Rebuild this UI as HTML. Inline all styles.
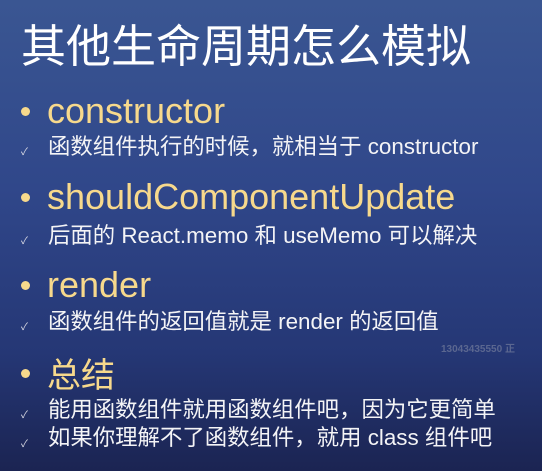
<!DOCTYPE html>
<html><head><meta charset="utf-8"><style>
html,body{margin:0;padding:0}
body{width:542px;height:471px;overflow:hidden;position:relative;
background:linear-gradient(180deg,#3a5692 0%,#30478a 40%,#253775 75%,#1b2452 100%);
font-family:"Liberation Sans","Noto Sans CJK SC",sans-serif;color:#fff}
.t{position:absolute;left:21px;top:15px;font-size:45px;line-height:56px;font-family:"Noto Sans CJK SC",sans-serif;white-space:nowrap}
.h{position:absolute;left:47px;font-size:36px;line-height:42px;color:#f7d98c;white-space:nowrap}
.d{position:absolute;left:21px;width:9px;height:9px;border-radius:50%;background:#f7d98c}
.s{position:absolute;left:48px;font-size:22.4px;line-height:28px;color:#f4f4f6;white-space:nowrap}
.c{position:absolute;left:21px;font-size:10px;color:#e0e0e8}
.w{position:absolute;left:441px;top:340px;font-size:10px;font-weight:bold;color:#5b6790;white-space:nowrap}
</style></head><body>
<div class="t">其他生命周期怎么模拟</div>

<div class="d" style="top:107px"></div><div class="h" style="top:90px">constructor</div>
<div class="c" style="top:143px">✓</div><div class="s" style="top:133px">函数组件执行的时候，就相当于 constructor</div>

<div class="d" style="top:193px"></div><div class="h" style="top:176px">shouldComponentUpdate</div>
<div class="c" style="top:232px">✓</div><div class="s" style="top:222px">后面的 React.memo 和 useMemo 可以解决</div>

<div class="d" style="top:281px"></div><div class="h" style="top:264px">render</div>
<div class="c" style="top:318px">✓</div><div class="s" style="top:308px">函数组件的返回值就是 render 的返回值</div>

<div class="d" style="top:369px"></div><div class="h" style="top:352px;font-size:34px;font-family:'Noto Sans CJK SC',sans-serif">总结</div>
<div class="c" style="top:406px">✓</div><div class="s" style="top:396px">能用函数组件就用函数组件吧，因为它更简单</div>
<div class="c" style="top:435px">✓</div><div class="s" style="top:424px">如果你理解不了函数组件，就用 class 组件吧</div>

<div class="w">13043435550 正</div>
</body></html>
